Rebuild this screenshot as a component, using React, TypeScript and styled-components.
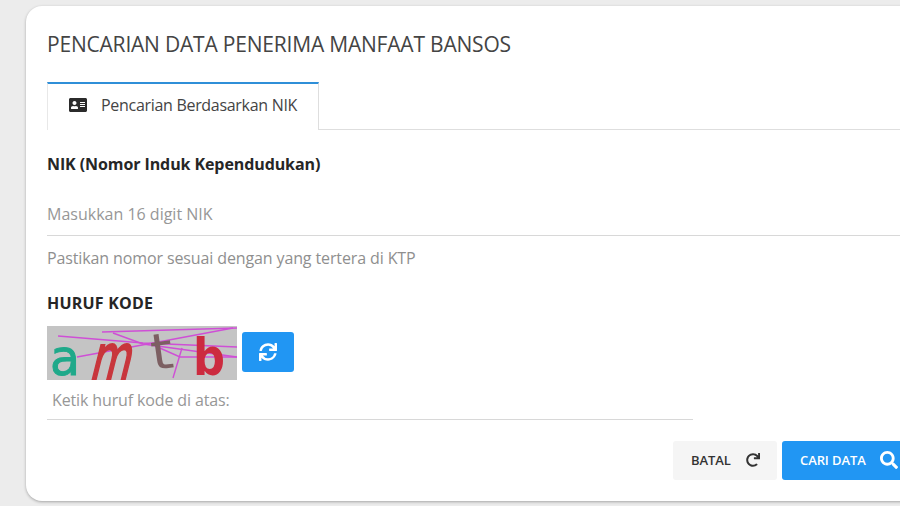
import React from "react";
import styled, { createGlobalStyle } from "styled-components";
import { FaAddressCard, FaRedo, FaSearch, FaSync } from "react-icons/fa";

const GlobalStyle = createGlobalStyle`
  html, body {
    margin: 0;
    width: 900px;
    height: 506px;
    overflow: hidden;
    background: #ececec;
    font-family: "Open Sans", "Noto Sans", "Liberation Sans", sans-serif;
  }
`;

function Captcha() {
  return (
    <CaptchaSvg viewBox="0 0 190 54" width="190" height="54">
      <rect width="190" height="54" fill="#c4c4c4" />
      <g stroke="#cf4fd6" strokeWidth="1.4" fill="none">
        <path d="M55 6 L190 2" />
        <path d="M11 10 L96 17 L190 21" />
        <path d="M66 7 L96 18 L190 31" />
        <path d="M30 31 L106 17 L186 2" />
        <path d="M106 19 L133 31 L190 31" />
        <path d="M135 22 L126 52" />
      </g>
      <CaptchaLetter x="3" y="49" size={50} textLength={30} lengthAdjust="spacingAndGlyphs" fill="#1fa98a" stroke="#1fa98a" strokeWidth="1">a</CaptchaLetter>
      <CaptchaLetter x="43" y="54" size={64} textLength={40} lengthAdjust="spacingAndGlyphs" fill="#c8363c" stroke="#c8363c" strokeWidth="2.2" transform="skewX(-14) translate(12 0)">m</CaptchaLetter>
      <CaptchaLetter x="104" y="43" size={50} textLength={22} lengthAdjust="spacingAndGlyphs" fill="#7c5f62" transform="rotate(-8 114 28)">t</CaptchaLetter>
      <CaptchaLetter x="146" y="49" size={52} textLength={32} lengthAdjust="spacingAndGlyphs" fill="#cc2b3f" $bold>b</CaptchaLetter>
    </CaptchaSvg>
  );
}

export default function App() {
  return (
    <>
      <GlobalStyle />
      <Page>
        <Card>
          <Title>PENCARIAN DATA PENERIMA MANFAAT BANSOS</Title>
          <TabBar>
            <Tab>
              <FaAddressCard size={18} color="#2b2b2b" />
              <span>Pencarian Berdasarkan NIK</span>
            </Tab>
          </TabBar>
          <Label>NIK (Nomor Induk Kependudukan)</Label>
          <FullInput placeholder="Masukkan 16 digit NIK" />
          <Help>Pastikan nomor sesuai dengan yang tertera di KTP</Help>
          <CodeLabel>HURUF KODE</CodeLabel>
          <CaptchaRow>
            <Captcha />
            <RefreshButton type="button" aria-label="Muat ulang">
              <FaSync size={18} />
            </RefreshButton>
          </CaptchaRow>
          <CodeInput placeholder="Ketik huruf kode di atas:" />
          <Actions>
            <ResetButton type="button">
              BATAL
              <FaRedo size={14} />
            </ResetButton>
            <SearchButton type="button">
              CARI DATA
              <FaSearch size={18} />
            </SearchButton>
          </Actions>
        </Card>
      </Page>
    </>
  );
}

const Page = styled.div`
  width: 900px;
  height: 506px;
  padding: 6px 0 5px 26px;
  box-sizing: border-box;
  overflow: hidden;
`;

const Card = styled.div`
  width: 920px;
  height: 495px;
  box-sizing: border-box;
  padding: 24px 0 0 21px;
  background: #fff;
  border-radius: 16px 0 0 16px;
  box-shadow: 0 1px 3px rgba(0, 0, 0, 0.3);
`;

const Title = styled.h1`
  margin: 0;
  height: 28px;
  font-size: 21px;
  line-height: 28px;
  font-weight: 400;
  color: #444;
  letter-spacing: -0.2px;
  white-space: nowrap;
`;

const TabBar = styled.div`
  display: flex;
  margin-top: 24px;
  border-bottom: 1px solid #dedede;
`;

const Tab = styled.div`
  box-sizing: border-box;
  width: 272px;
  height: 48px;
  margin-bottom: -1px;
  padding: 0 0 5px 21px;
  display: flex;
  align-items: center;
  gap: 14px;
  background: #fff;
  border-top: 2px solid #2f8fd8;
  border-left: 1px solid #e8e8e8;
  border-right: 1px solid #dedede;
  font-size: 16px;
  color: #444;
  letter-spacing: -0.3px;
  white-space: nowrap;
`;

const Label = styled.div`
  margin-top: 23px;
  height: 22px;
  font-size: 16px;
  line-height: 22px;
  font-weight: 700;
  color: #262626;
  letter-spacing: -0.09px;
`;

const FullInput = styled.input`
  display: block;
  box-sizing: border-box;
  width: 100%;
  height: 44px;
  margin-top: 17px;
  padding: 0;
  border: 0;
  border-bottom: 1px solid #d8d8d8;
  outline: none;
  font: inherit;
  font-size: 16px;
  &::placeholder {
    color: #979797;
    opacity: 1;
  }
`;

const Help = styled.div`
  margin-top: 11px;
  height: 22px;
  font-size: 16px;
  line-height: 22px;
  color: #8f8f8f;
  letter-spacing: -0.12px;
`;

const CodeLabel = styled.div`
  margin-top: 23px;
  height: 22px;
  font-size: 16px;
  line-height: 22px;
  font-weight: 700;
  color: #262626;
  letter-spacing: 0.2px;
`;

const CaptchaRow = styled.div`
  display: flex;
  align-items: flex-start;
  gap: 5px;
  margin-top: 12px;
  height: 54px;
`;

const CaptchaSvg = styled.svg`
  display: block;
  filter: blur(0.4px);
`;

const CaptchaLetter = styled.text<{ size: number; $bold?: boolean }>`
  font-family: "DejaVu Sans", sans-serif;
  font-size: ${(p) => p.size}px;
  font-weight: ${(p) => (p.$bold ? 700 : 400)};
`;

const RefreshButton = styled.button`
  width: 52px;
  height: 40px;
  margin-top: 6px;
  padding: 0;
  display: flex;
  align-items: center;
  justify-content: center;
  border: 0;
  border-radius: 3px;
  background: #2196f3;
  color: #fff;
`;

const CodeInput = styled.input`
  display: block;
  box-sizing: border-box;
  width: 646px;
  height: 40px;
  padding: 0 0 0 5px;
  border: 0;
  border-bottom: 1px solid #d8d8d8;
  outline: none;
  font: inherit;
  font-size: 16px;
  letter-spacing: -0.13px;
  &::placeholder {
    color: #979797;
    opacity: 1;
  }
`;

const Actions = styled.div`
  display: flex;
  gap: 5px;
  margin: 21px 0 0 626px;
`;

const ActionButton = styled.button`
  height: 39px;
  display: flex;
  align-items: center;
  box-sizing: border-box;
  border: 0;
  border-radius: 3px;
  font: inherit;
  font-size: 13px;
  font-weight: 600;
  letter-spacing: -0.1px;
  white-space: nowrap;
`;

const ResetButton = styled(ActionButton)`
  width: 104px;
  padding: 0 0 2px 18px;
  gap: 15px;
  background: #f5f5f5;
  color: #333;
`;

const SearchButton = styled(ActionButton)`
  width: 135px;
  padding: 0 0 2px 18px;
  gap: 14px;
  background: #2196f3;
  color: #fff;
`;
